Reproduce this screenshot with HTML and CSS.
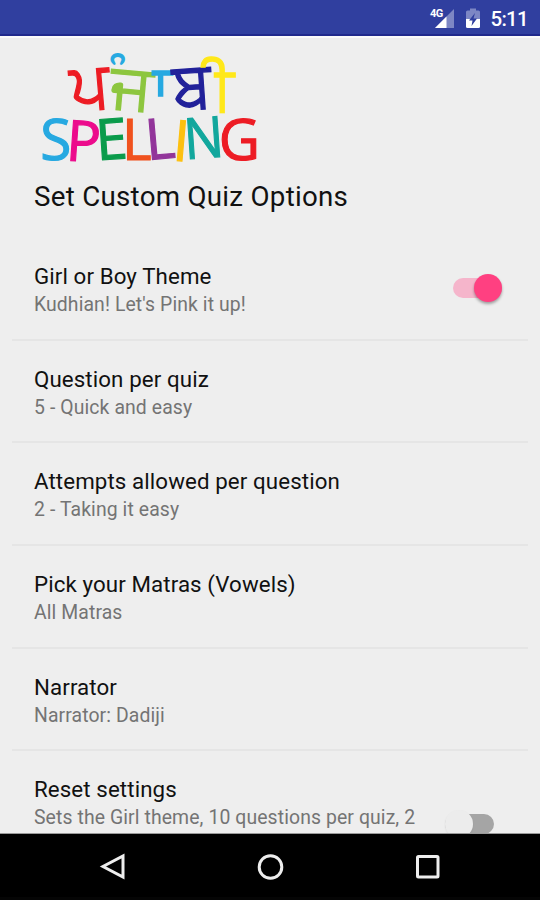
FILE: index.html
```
<!DOCTYPE html>
<html lang="en">
<head>
<meta charset="utf-8">
<title>Punjabi Spelling</title>
<link rel="stylesheet" href="styles.css">
</head>
<body>
<div class="screen">
  <header class="status">
    <svg class="signal" width="26" height="22" viewBox="0 0 26 22">
      <path d="M25 1V20H6Z" fill="#7d87c4"/>
      <path d="M17.500 8.500V20H6Z" fill="#fff"/>
      <text x="1" y="9" class="network">4G</text>
    </svg>
    <svg class="battery" width="14" height="22" viewBox="0 0 14 22">
      <path d="M4 0.500H10V2.500H12.500Q14 2.500 14 4V11H0V4Q0 2.500 1.500 2.500H4Z" fill="#7d87c4"/>
      <path d="M0 11H14V18.500Q14 20 12.500 20H1.500Q0 20 0 18.500Z" fill="#fff"/>
      <path d="M9 5L3 12.500H6.500L5.500 18L11 10.500H7.500Z" fill="#303f9f"/>
    </svg>
    <span class="clock">5:11</span>
  </header>
  <main class="content">
    <svg class="logo" width="240" height="125" viewBox="0 0 720 375">
      <g class="punjabi">
        <text transform="translate(126 193) rotate(-5) scale(.94 1)" fill="#ed1c24" stroke="#ed1c24">ਪ</text>
        <text transform="translate(246 148) scale(.7)" fill="#27a9e1" stroke="#27a9e1" stroke-width="8">&#160;ੰ</text>
        <text transform="translate(238 184) rotate(5) scale(1 .97)" fill="#8dc63f" stroke="#8dc63f">ਜ</text>
        <text transform="translate(316 193)" fill="#27a9e1" stroke="#27a9e1">&#160;ਾ</text>
        <text transform="translate(431 190) rotate(-4) scale(.96 1)" fill="#21219a" stroke="#21219a">ਬ</text>
        <text transform="translate(500 195) scale(.98 .97)" fill="#ffe81a" stroke="#ffe81a">&#160;ੀ</text>
      </g>
      <g class="spelling">
        <text x="31" y="344" fill="#27a9e1" stroke="#27a9e1">S</text>
        <text transform="translate(106 346) rotate(4)" fill="#ec0b8c" stroke="#ec0b8c">P</text>
        <text transform="translate(201 346) rotate(-4)" fill="#0a9b4b" stroke="#0a9b4b">E</text>
        <text x="276" y="344" fill="#f0521e" stroke="#f0521e">L</text>
        <text transform="translate(351 345) rotate(-5)" fill="#92359a" stroke="#92359a">L</text>
        <text transform="translate(425 346) rotate(5)" fill="#fdc010" stroke="#fdc010">I</text>
        <text transform="translate(466 343) rotate(-4) scale(.93 1)" fill="#12a79d" stroke="#12a79d">N</text>
        <text x="566" y="344" fill="#ed1c24" stroke="#ed1c24">G</text>
      </g>
    </svg>
    <h1 class="heading">Set Custom Quiz Options</h1>
    <ul class="options">
      <li class="row"><div><div class="name">Girl or Boy Theme</div><div class="summary">Kudhian! Let's Pink it up!</div></div><span class="switch on"></span></li>
      <li class="row"><div><div class="name">Question per quiz</div><div class="summary">5 - Quick and easy</div></div></li>
      <li class="row"><div><div class="name">Attempts allowed per question</div><div class="summary">2 - Taking it easy</div></div></li>
      <li class="row"><div><div class="name">Pick your Matras (Vowels)</div><div class="summary">All Matras</div></div></li>
      <li class="row"><div><div class="name">Narrator</div><div class="summary">Narrator: Dadiji</div></div></li>
      <li class="row"><div><div class="name">Reset settings</div><div class="summary">Sets the Girl theme, 10 questions per quiz, 2</div></div><span class="switch off"></span></li>
    </ul>
  </main>
  <nav class="navbar">
    <svg width="30" height="30" viewBox="0 0 30 30"><path d="M26 4V25L6 14.500Z"/></svg>
    <svg width="30" height="30" viewBox="0 0 30 30"><circle cx="15.500" cy="15" r="11.300"/></svg>
    <svg width="30" height="30" viewBox="0 0 30 30"><rect x="5.500" y="4.500" width="20.500" height="20.500" rx="1"/></svg>
  </nav>
</div>
</body>
</html>
```
FILE: styles.css
```
* { box-sizing: border-box; }
body { margin: 0; font-family: Roboto, "Liberation Sans", sans-serif; }
.screen { width: 540px; height: 900px; display: flex; flex-direction: column; overflow: hidden; background: #eee; }
.status { height: 36px; flex: none; background: #303f9f; border-bottom: 2px solid #20298c; display: flex; justify-content: flex-end; padding: 8px 12px 0 0; color: #fff; }
.signal { margin-right: 11px; }
.network { font: bold 11px Roboto, sans-serif; fill: #fff; letter-spacing: -0.5px; }
.battery { margin-right: 10px; }
.clock { font-size: 20.5px; font-weight: 500; line-height: 23px; letter-spacing: -0.7px; }
.content { flex: 1; min-height: 0; overflow: hidden; border-top: 2px solid #fafafa; padding-top: 7px; border-bottom: 1px solid #999; }
.logo { display: block; margin-left: 30px; overflow: visible; }
.punjabi { font: 193px "Noto Sans", sans-serif; stroke-width: 4; }
.spelling { font: 170px "Open Sans", sans-serif; stroke-width: 3.5; }
.heading { margin: 10px 0 0 34px; font-size: 27.7px; font-weight: 400; line-height: 34px; letter-spacing: 0.28px; color: #111; white-space: nowrap; }
.options { list-style: none; margin: 24px 12px 0; padding: 0; }
.row { height: 102.7px; display: flex; justify-content: space-between; padding: 23px 26px 0 22px; border-bottom: 2px solid #e5e5e5; white-space: nowrap; }
.name { font-size: 22.3px; line-height: 30px; letter-spacing: 0.1px; color: #111; }
.summary { font-size: 19.4px; line-height: 28px; letter-spacing: 0.1px; color: #747474; }
.switch { width: 49px; height: 20px; margin-top: 17px; border-radius: 10px; position: relative; flex: none; }
.switch.on { background: #f5b5cb; }
.switch::after { content: ""; position: absolute; width: 28px; height: 28px; border-radius: 50%; top: -4px; }
.switch.on::after { right: 0; background: #ff4081; box-shadow: 0 2px 3px #0005; }
.switch.off { background: #a5a5a5; margin: 40px 8px 0 0; }
.switch.off::after { left: 0; background: #ececec; box-shadow: 0 1px 2px #0001; }
.navbar { height: 66px; flex: none; background: #000; border-bottom: 3px solid #050505; display: flex; justify-content: space-between; padding: 18px 98px 0 97px; }
.navbar svg { fill: none; stroke: #eee; stroke-width: 3; }
```
